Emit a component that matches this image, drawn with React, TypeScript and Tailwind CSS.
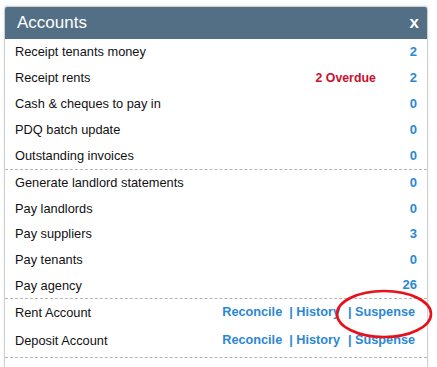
import React from 'react';

const font = { fontFamily: '"Liberation Sans", Arial, sans-serif' };

const countRows1 = [
  { label: 'Receipt tenants money', value: '2' },
  { label: 'Receipt rents', value: '2', note: '2 Overdue' },
  { label: 'Cash & cheques to pay in', value: '0' },
  { label: 'PDQ batch update', value: '0' },
  { label: 'Outstanding invoices', value: '0' },
];

const countRows2 = [
  { label: 'Generate landlord statements', value: '0' },
  { label: 'Pay landlords', value: '0' },
  { label: 'Pay suppliers', value: '3' },
  { label: 'Pay tenants', value: '0' },
  { label: 'Pay agency', value: '26' },
];

const Row: React.FC<{ label: string; value: string; note?: string; h: string }> = ({ label, value, note, h }) => (
  <div className={`flex items-center pl-[10px] pr-[10px] ${h}`}>
    <span className="flex-1 text-[12.8px] text-[#111]">{label}</span>
    {note && <span className="mr-[34px] text-[12.3px] font-bold text-[#c8102e]">{note}</span>}
    <span className="text-[13px] font-bold text-[#2b88d3]">{value}</span>
  </div>
);

const AccountRow: React.FC<{ label: string }> = ({ label }) => (
  <div className="flex h-[28px] items-center pl-[10px] pr-[12px]">
    <span className="flex-1 text-[12.8px] text-[#111]">{label}</span>
    <div className="flex items-center text-[12.7px] font-bold text-[#2b88d3]">
      <span>Reconcile</span>
      <span className="ml-[7px]">| History</span>
      <span className="ml-[8px]">| Suspense</span>
    </div>
  </div>
);

export default function App() {
  return (
    <div className="min-h-screen bg-white pt-[6px] pl-[4px]" style={font}>
      <div className="relative w-[424px] rounded-t-[3px] border border-[#d0d0d0] bg-white shadow-[0_-1px_3px_rgba(0,0,0,0.08)]">
        <div className="flex h-[32px] items-center justify-between rounded-t-[2px] bg-[#536f85] pl-[12px] pr-[8px] text-white">
          <span className="text-[17px]">Accounts</span>
          <span className="text-[17px] font-bold">x</span>
        </div>
        <div>
          {countRows1.map((r) => (
            <Row key={r.label} {...r} h="h-[26px]" />
          ))}
        </div>
        <div className="border-t border-dashed border-[#b5b5b5]">
          {countRows2.map((r) => (
            <Row key={r.label} {...r} h="h-[25.6px]" />
          ))}
        </div>
        <div className="border-t border-dashed border-[#b5b5b5] pb-[2px]">
          <AccountRow label="Rent Account" />
          <AccountRow label="Deposit Account" />
        </div>
        <div className="h-[12px] border-t border-dashed border-[#b5b5b5]" />

        <svg className="pointer-events-none absolute left-[330px] top-[282px]" width="100" height="52" viewBox="0 0 100 52">
          <ellipse cx="49" cy="25" rx="47" ry="23" fill="none" stroke="#e8101a" strokeWidth="2.6" />
        </svg>
      </div>
    </div>
  );
}
